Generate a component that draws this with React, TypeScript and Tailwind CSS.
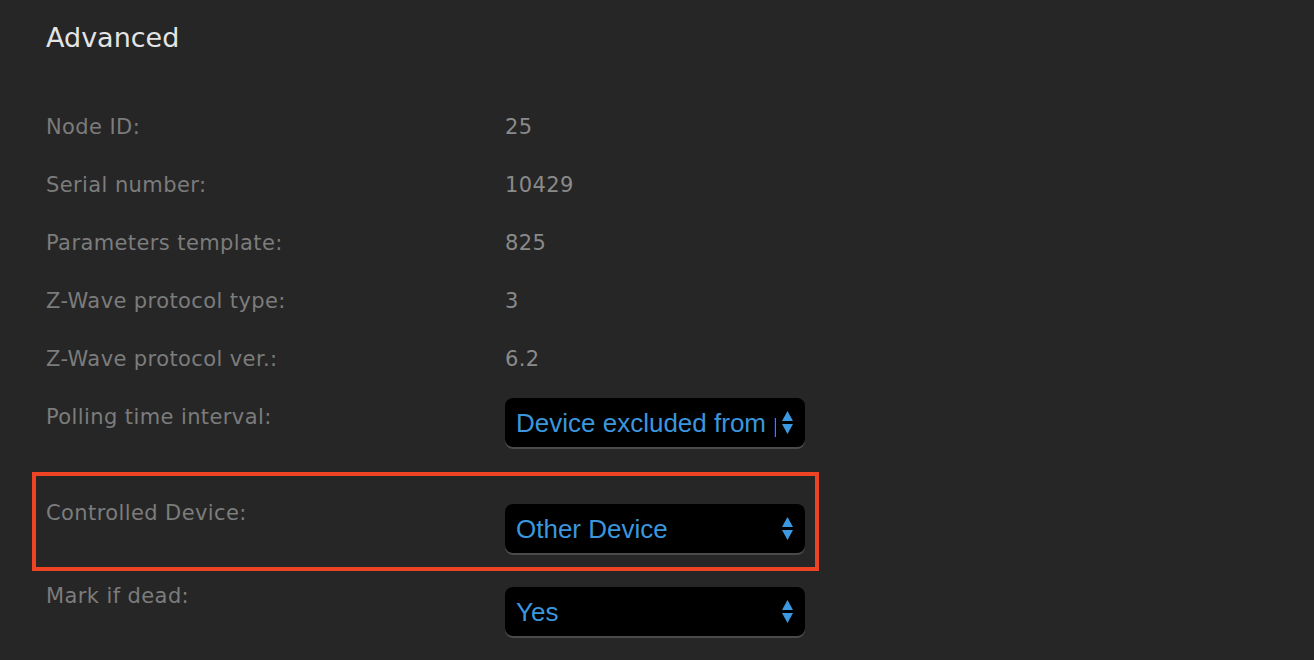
type InfoRowProps = {
  label: string
  value: string
}

const labelClass =
  "text-[21px] leading-[28px] tracking-[0.4px] text-[#7c7c7c] font-['DejaVu_Sans',Verdana,sans-serif]"

function InfoRow({ label, value }: InfoRowProps) {
  return (
    <div className="grid h-[58px] grid-cols-[459px_1fr]">
      <p className={labelClass}>{label}</p>
      <p className={labelClass + ' text-[#8a8a8a]'}>{value}</p>
    </div>
  )
}

function SelectArrows() {
  return (
    <svg width="11" height="23" viewBox="0 0 11 23" className="shrink-0">
      <path d="M5.5 0 L11 10 L0 10 Z" fill="#3d98e2" />
      <path d="M0 13 L11 13 L5.5 23 Z" fill="#3d98e2" />
    </svg>
  )
}

type FakeSelectProps = {
  value: string
}

function FakeSelect({ value }: FakeSelectProps) {
  return (
    <div className="flex h-[49px] w-[300px] items-center rounded-[8px] bg-black pl-[11px] pr-[12px] shadow-[0_2px_0_#4a4a4a]">
      <span className="min-w-0 flex-1 overflow-hidden whitespace-nowrap pt-[1px] text-[26px] leading-[30px] text-[#3b96dd] font-['Liberation_Sans',Arial,sans-serif]">
        <span className="block w-[260px] overflow-hidden">{value}</span>
      </span>
      <SelectArrows />
    </div>
  )
}

export default function App() {
  return (
    <div className="h-[660px] w-[1314px] overflow-hidden bg-[#262626]">
      <div className="pl-[46px] pt-[20px]">
        <h2 className="text-[27px] leading-[36px] text-[#e4e4e4] font-['DejaVu_Sans',Verdana,sans-serif]">
          Advanced
        </h2>
      </div>

      <div className="mt-[57px] pl-[46px]">
        <InfoRow label="Node ID:" value="25" />
        <InfoRow label="Serial number:" value="10429" />
        <InfoRow label="Parameters template:" value="825" />
        <InfoRow label="Z-Wave protocol type:" value="3" />
        <InfoRow label="Z-Wave protocol ver.:" value="6.2" />

        <div className="-mt-[5px] grid grid-cols-[459px_1fr]">
          <p className={labelClass + ' pt-[5px]'}>Polling time interval:</p>
          <FakeSelect value="Device excluded from polling" />
        </div>
      </div>

      <div className="ml-[32px] mt-[25px] w-[787px] border-4 border-[#ee4424] pb-[14px] pl-[10px] pt-[23px]">
        <div className="grid grid-cols-[459px_1fr]">
          <p className={labelClass}>Controlled Device:</p>
          <div className="pt-[5px]">
            <FakeSelect value="Other Device" />
          </div>
        </div>
      </div>

      <div className="mt-[11px] grid grid-cols-[459px_1fr] pl-[46px]">
        <p className={labelClass}>Mark if dead:</p>
        <div className="pt-[5px]">
          <FakeSelect value="Yes" />
        </div>
      </div>
    </div>
  )
}
